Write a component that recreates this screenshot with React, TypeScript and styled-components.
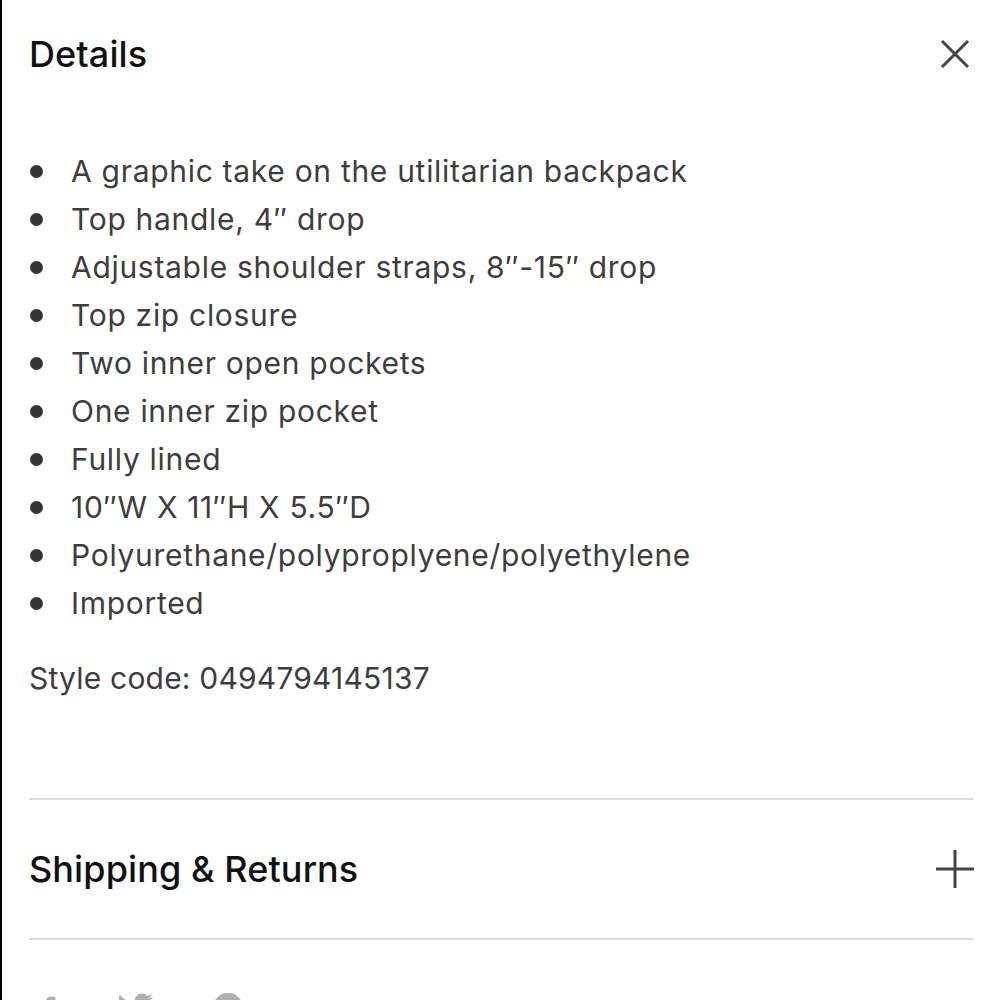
import React from "react";
import styled, { createGlobalStyle } from "styled-components";

const Global = createGlobalStyle`
  html, body { margin: 0; padding: 0; background: #fff; }
  body { font-family: Inter, "Noto Sans", sans-serif; }
`;

const Page = styled.div`
  width: 1000px;
  height: 1000px;
  overflow: hidden;
  box-sizing: border-box;
  border-left: 2px solid #000;
  padding: 0 27px 0 27px;
  background: #fff;
`;

const HeaderRow = styled.div`
  height: 108px;
  display: flex;
  align-items: center;
  justify-content: space-between;
`;

const Title = styled.h2`
  margin: 0;
  font-size: 36px;
  font-weight: 500;
  color: #111;
  letter-spacing: 0.1px;
`;

const IconButton = styled.button`
  border: 0;
  background: none;
  padding: 0;
  width: 40px;
  height: 40px;
  display: flex;
  align-items: center;
  justify-content: center;
  margin-right: -2px;
`;

const List = styled.ul`
  list-style: none;
  margin: 39px 0 0 0;
  padding: 0;
`;

const Item = styled.li`
  display: flex;
  align-items: center;
  height: 48px;
  font-size: 30px;
  color: #3d3d3d;
  letter-spacing: 0.7px;
  &::before {
    content: "";
    width: 13px;
    height: 13px;
    border-radius: 50%;
    background: #333;
    margin: 0 28px 0 1px;
    flex-shrink: 0;
  }
`;

const StyleCode = styled.p`
  margin: 27px 0 0 0;
  height: 48px;
  line-height: 48px;
  font-size: 30px;
  color: #3d3d3d;
  letter-spacing: 0.2px;
`;

const Divider = styled.hr<{ $top: number }>`
  border: 0;
  height: 2px;
  background: #dcdcdc;
  margin: ${(p) => p.$top}px 0 0 0;
`;

const AccordionRow = styled.div`
  height: 138px;
  display: flex;
  align-items: center;
  justify-content: space-between;
`;

const Social = styled.div`
  display: flex;
  gap: 60px;
  margin-top: 53px;
  padding-left: 12px;
  color: #b0b0b0;
`;

const items = [
  "A graphic take on the utilitarian backpack",
  "Top handle, 4\u2033 drop",
  "Adjustable shoulder straps, 8\u2033-15\u2033 drop",
  "Top zip closure",
  "Two inner open pockets",
  "One inner zip pocket",
  "Fully lined",
  "10\u2033W X 11\u2033H X 5.5\u2033D",
  "Polyurethane/polyproplyene/polyethylene",
  "Imported",
];

export default function App() {
  return (
    <>
      <Global />
      <Page>
        <HeaderRow>
          <Title>Details</Title>
          <IconButton aria-label="Close">
            <svg width="32" height="32" viewBox="0 0 32 32">
              <path d="M3 3 L29 29 M29 3 L3 29" stroke="#444" strokeWidth="3" fill="none" />
            </svg>
          </IconButton>
        </HeaderRow>
        <List>
          {items.map((t) => (
            <Item key={t}>{t}</Item>
          ))}
        </List>
        <StyleCode>Style code: 0494794145137</StyleCode>
        <Divider $top={96} />
        <AccordionRow>
          <Title>Shipping &amp; Returns</Title>
          <IconButton aria-label="Expand">
            <svg width="40" height="40" viewBox="0 0 40 40">
              <path d="M20 1 V39 M1 20 H39" stroke="#444" strokeWidth="3" fill="none" />
            </svg>
          </IconButton>
        </AccordionRow>
        <Divider $top={0} />
        <Social>
          <svg width="16" height="36" viewBox="0 0 20 36">
            <path d="M13 0 C8 0 6 3 6 7 V12 H2 V18 H6 V36 H12 V18 H17 L18 12 H12 V8 C12 6 13 5 15 5 H18 V0.5 C17 0.3 15 0 13 0 Z" fill="currentColor" />
          </svg>
          <svg width="36" height="30" viewBox="0 0 36 30">
            <path d="M36 4 C34.7 4.6 33.3 5 31.8 5.2 C33.3 4.3 34.5 2.8 35 1 C33.6 1.9 32 2.5 30.3 2.8 C29 1.4 27.1 0.5 25 0.5 C21 0.5 17.7 3.8 17.7 7.8 C17.7 8.4 17.8 8.9 17.9 9.5 C11.8 9.2 6.4 6.3 2.8 1.8 C2.2 2.9 1.8 4.1 1.8 5.5 C1.8 8 3.1 10.2 5 11.5 C3.8 11.5 2.7 11.1 1.7 10.6 C1.7 14.2 4.2 17.1 7.6 17.8 C6.5 18.1 5.2 18.2 4.3 18 C5.2 21 8 23 11.2 23.1 C7.7 25.8 3.6 26.8 0 26.4 C3.3 28.5 7.2 29.7 11.3 29.7 C24.9 29.7 32.3 18.5 32.3 8.7 L32.3 7.8 C33.8 6.8 35 5.5 36 4 Z" fill="currentColor" />
          </svg>
          <svg width="30" height="30" viewBox="0 0 34 34">
            <circle cx="17" cy="17" r="17" fill="currentColor" />
          </svg>
        </Social>
      </Page>
    </>
  );
}
